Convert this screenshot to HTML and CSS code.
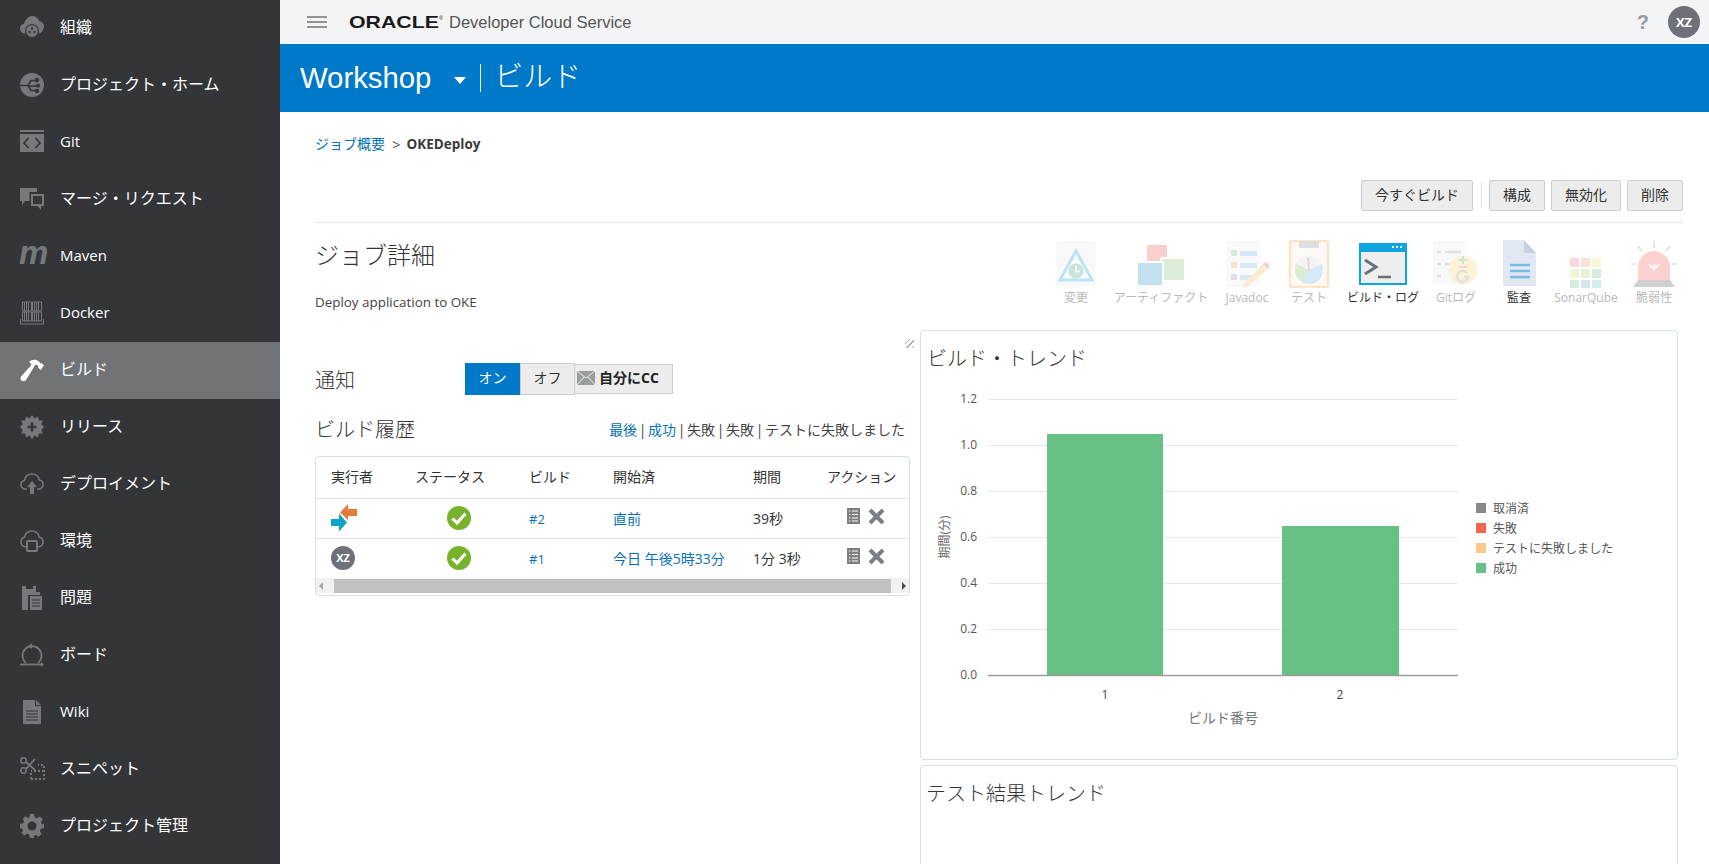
FILE: index.html
```html
<!DOCTYPE html>
<html lang="ja">
<head>
<meta charset="utf-8">
<title>ビルド</title>
<link rel="stylesheet" href="styles.css">
</head>
<body>
<div class="app">
  <nav class="side">
    <a class="item"><svg class="ni" viewBox="0 0 24 24"><path d="M5.500 17.500C2.500 17.500 0 15.500 0 12.500c0-2.500 1.800-4.300 4-4.800C5 4.500 8 0 12 0c3.600 0 6.200 2 7.300 5.200 2.700.3 4.700 2.500 4.700 5.100 0 2.900-2.300 7.200-5.200 7.200Z"/><circle cx="12" cy="15" r="6.500" stroke="#333538" stroke-width="1.200"/><circle cx="12" cy="12.500" r="1.200" fill="#333538"/><circle cx="9.500" cy="16" r="1.200" fill="#333538"/><circle cx="14.500" cy="16" r="1.200" fill="#333538"/></svg><span>組織</span></a>
    <a class="item"><svg class="ni" viewBox="0 0 24 24"><circle cx="12" cy="12" r="12"/><path d="M0 12.500h8l3-5h6M8 12.500l3 5h6M8 13h9" fill="none" stroke="#333538" stroke-width="1.600"/><circle cx="17" cy="7" r="2.200" fill="#333538"/><circle cx="18" cy="12.800" r="2" fill="#333538"/><circle cx="17" cy="18" r="2.200" fill="#333538"/></svg><span>プロジェクト・ホーム</span></a>
    <a class="item"><svg class="ni" viewBox="0 0 24 24"><path d="M0 0h24v2H0Z"/><path d="M0 4h24v18H0Z"/><path d="M8.500 8 4 13l4.500 5M15.500 8l4.500 5-4.500 5" fill="none" stroke="#333538" stroke-width="1.700"/></svg><span class="la">Git</span></a>
    <a class="item"><svg class="ni" viewBox="0 0 24 24"><path d="M0 1h17v4H9.500v9H5l-3 4v-4H0Z"/><path d="M11 7h13v12h-3v4l-3.500-4H11Zm2 2v8h9V9Z"/></svg><span>マージ・リクエスト</span></a>
    <a class="item"><svg class="ni" viewBox="0 0 24 24"><text class="mv" x="-1" y="20">m</text></svg><span class="la">Maven</span></a>
    <a class="item"><svg class="ni" viewBox="0 0 24 24"><path d="M2.500 1h9v9h-9Zm10 0h9v9h-9Zm-10 10h9v9h-9Zm10 0h9v9h-9Z" fill="none" stroke="#75797c"/><path d="M4.500 1v9M6.500 1v9M8.500 1v9M14.500 1v9M16.500 1v9M18.500 1v9M4.500 11v9M6.500 11v9M8.500 11v9M14.500 11v9M16.500 11v9M18.500 11v9" stroke="#75797c"/><path d="M.5 18v5h23v-5" fill="none" stroke="#75797c"/></svg><span class="la">Docker</span></a>
    <a class="item on"><svg class="ni wh" viewBox="0 0 24 24"><path d="M9 4c3-3 7-3 10-.500l1.500 2 1-.500 2.500 2.500-3.500 4.500-2.500-2.500.500-1.500-3-1.500L6 22c-1 1.500-3 1.500-4.500.500C.5 21.500 0 20 1 18.500L11.500 7C11 5.500 10 4.500 9 4Z"/></svg><span>ビルド</span></a>
    <a class="item"><svg class="ni" viewBox="0 0 24 24"><path d="m12 0 2.500 3.500L18 1.500l.8 4 4-.3-1.500 4L24 12l-2.700 2.800 1.500 4-4-.3-.8 4-3.500-2-2.500 3.500-2.500-3.500-3.500 2-.8-4-4 .3 1.500-4L0 12l2.700-2.800-1.500-4 4 .3.8-4 3.500 2Z"/><path d="M12 7.500v9M7.500 12h9" stroke="#333538" stroke-width="2.500"/></svg><span>リリース</span></a>
    <a class="item"><svg class="ni line" viewBox="0 0 24 24"><path d="M7 17H5.500C3 17 1 15 1 12.500 1 10.300 2.500 8.700 4.500 8.200 5.300 4.500 8.300 2 12 2c3.600 0 6.500 2.500 7.400 6 2.100.4 3.600 2.200 3.600 4.500 0 2.500-2 4.500-4.500 4.500H17"/><path class="fl" d="M12 9l5 6h-3v7h-4v-7H7Z"/></svg><span>デプロイメント</span></a>
    <a class="item"><svg class="ni line" viewBox="0 0 24 24"><path d="M6 18C3 18 1 15.500 1 13c0-2.300 1.500-4.200 3.500-4.800C5.300 4.500 8.300 2 12 2c3.600 0 6.500 2.500 7.400 6.200 2.100.4 3.600 2.400 3.600 4.800 0 2.500-2 5-5 5"/><rect x="7" y="12" width="10" height="10" rx="1" stroke-width="2"/></svg><span>環境</span></a>
    <a class="item"><svg class="ni" viewBox="0 0 24 24"><path d="M2 0h4v3h7V0h3v6h4v3H8v15H2Z"/><path d="M10 10h12v14H10Z"/><path d="M12 14h8M12 17h8M12 20h8" stroke="#333538" stroke-width="1.200"/></svg><span>問題</span></a>
    <a class="item"><svg class="ni line" viewBox="0 0 24 24"><path d="M6 20a9.500 9.500 0 1 1 12 0" stroke-width="1.800"/><path class="fl" d="M12 0v6l-3.500-3Z"/><path d="M0 21.500h23" stroke-width="1.800"/><path class="fl" d="M24 21.500 21 19v5Z"/></svg><span>ボード</span></a>
    <a class="item"><svg class="ni" viewBox="0 0 24 24"><path d="M3 0h12v6h6v18H3Z"/><path d="M16 0l5 5h-5Z"/><path d="M6 11h12M6 14h12M6 17h12M6 20h12" stroke="#333538" stroke-width="1"/></svg><span class="la">Wiki</span></a>
    <a class="item"><svg class="ni line" viewBox="0 0 24 24"><circle cx="3.500" cy="3.500" r="2.700" stroke-width="1.500"/><circle cx="3.500" cy="13.500" r="2.700" stroke-width="1.500"/><path d="M6 5l9 8M6 12l9-10" stroke-width="1.800"/><path d="M11 22h13V8h-6M11 22v-6M24 14H11" stroke-width="2" stroke-dasharray="2 2"/></svg><span>スニペット</span></a>
    <a class="item"><svg class="ni" viewBox="0 0 24 24"><path fill-rule="evenodd" d="M10 0h4l.7 3.300 2.300 1L20 2.500 22.800 5.300 21 8.200l1 2.300L24 10v4l-3.200.8-1 2.200 1.700 2.900-2.800 2.800-2.900-1.700-2.200 1L14 24h-4l-.8-3.200-2.200-1-2.900 1.700-2.800-2.800L3 16.800l-1-2.200L0 14v-4l3.200-.8 1-2.200L2.500 5.100 5.300 2.300l2.900 1.700 1.100-.8ZM12 7.500a4.500 4.500 0 1 0 0 9 4.500 4.500 0 0 0 0-9Z"/></svg><span>プロジェクト管理</span></a>
  </nav>

  <div class="main">
    <header class="top">
      <div class="burger"><i></i><i></i><i></i></div>
      <svg class="logo" width="94" height="18" viewBox="0 0 94 18"><text x="0" y="15" textLength="90" lengthAdjust="spacingAndGlyphs">ORACLE</text><text class="reg" x="90" y="7">®</text></svg>
      <span class="prod">Developer Cloud Service</span>
      <span class="help">?</span>
      <span class="ava">XZ</span>
    </header>
    <div class="band">
      <span class="proj">Workshop</span>
      <span class="caret"></span>
      <span class="rule"></span>
      <span class="sect">ビルド</span>
    </div>

    <div class="page">
      <div class="crumb"><a class="lnk">ジョブ概要</a><span class="gt">&gt;</span><b>OKEDeploy</b></div>
      <div class="acts">
        <button class="btn">今すぐビルド</button>
        <span class="sep"></span>
        <button class="btn">構成</button>
        <button class="btn">無効化</button>
        <button class="btn">削除</button>
      </div>

      <section class="det">
        <div class="det-l">
          <h1>ジョブ詳細</h1>
          <p>Deploy application to OKE</p>
        </div>
        <div class="tabs">
          <div class="tab off"><svg viewBox="0 0 48 48"><rect x="4" y="1" width="40" height="46" rx="2" fill="#eee"/><path d="M24 11 40 40H8Z" fill="#e8f6fb" stroke="#23a8e6" stroke-width="3"/><circle cx="24" cy="31" r="7.500" fill="#5aa58a"/><path d="M24 26v5.500h4" stroke="#fff" stroke-width="1.500" fill="none"/></svg><span>変更</span></div>
          <div class="tab off"><svg viewBox="0 0 48 48"><rect x="10" y="5" width="20" height="22" rx="1" fill="#e8645a"/><rect x="24" y="18" width="24" height="23" rx="1" fill="#8cc47c" stroke="#fff" stroke-width="2"/><rect x="0" y="22" width="26" height="24" rx="1" fill="#3d9bd2" stroke="#fff" stroke-width="2"/></svg><span>アーティファクト</span></div>
          <div class="tab off"><svg viewBox="0 0 48 48"><rect x="3" y="1" width="34" height="46" rx="1" fill="#ececec"/><rect x="8" y="10" width="6" height="6" fill="#7cc27c"/><rect x="17" y="11" width="17" height="5" fill="#7eb8e6"/><rect x="8" y="22" width="6" height="6" fill="#f5a84c"/><rect x="17" y="23" width="17" height="5" fill="#7eb8e6"/><rect x="8" y="34" width="6" height="6" fill="#a58ccf"/><rect x="17" y="35" width="12" height="5" fill="#7eb8e6"/><path d="M20 44 40 24l5 5-20 17-6 2Z" fill="#f3bf6a"/><path d="m40 24 3-2 4 4-2 3Z" fill="#e8645a"/></svg><span>Javadoc</span></div>
          <div class="tab off"><svg viewBox="0 0 48 48"><rect x="5" y="1" width="38" height="46" rx="2" fill="#fbeedd" stroke="#f5a84c" stroke-width="2.500"/><rect x="14" y="1" width="20" height="7" fill="#999"/><circle cx="24" cy="30" r="14" fill="#78b8e6"/><path d="M24 30 11 24a14 14 0 0 1 26 0Z" fill="#ddd"/><path d="m24 30-13-6a14 14 0 0 0 7 18Z" fill="#8cc47c"/><path d="m23 18 1 12" stroke="#e8645a" stroke-width="2"/></svg><span>テスト</span></div>
          <div class="tab cur"><svg viewBox="0 0 48 48"><rect x="1" y="4" width="46" height="40" fill="#eee" stroke="#0ea4df" stroke-width="2"/><rect x="0" y="3" width="48" height="9" fill="#0ea4df"/><path d="M37 6h2v2h-2Zm4 0h2v2h-2Zm-8 0h2v2h-2Z" fill="#fff"/><path d="m6 20 11 7-11 7" fill="none" stroke="#66727e" stroke-width="3"/><path d="M19 37h13" stroke="#66727e" stroke-width="2.500"/></svg><span>ビルド・ログ</span></div>
          <div class="tab off"><svg viewBox="0 0 48 48"><rect x="1" y="1" width="32" height="44" rx="1" fill="#eee"/><path d="M5 12h4M13 12h16M5 24h4M13 24h16M5 36h4" stroke="#999" stroke-width="2.500"/><circle cx="31" cy="30" r="14.500" fill="#f6d77e"/><path d="M31 16v8M27 20h8" stroke="#5ab45a" stroke-width="2"/><path d="M27 27h8" stroke="#e8645a" stroke-width="2"/><path d="M35 33a5.500 5.500 0 1 0 1 4h-4" fill="none" stroke="#999" stroke-width="2.500"/></svg><span>Gitログ</span></div>
          <div class="tab cur"><svg viewBox="0 0 48 48"><path d="M8 0h21l12 13v33H8Z" fill="#e1e8f1"/><path d="m29 0 12 13H29Z" fill="#c8d2de"/><path d="M15 25h20M15 31h20M15 37h20" stroke="#7bb8e4" stroke-width="2.500"/></svg><span>監査</span></div>
          <div class="tab off"><svg viewBox="0 0 48 48"><g class="grid"><rect x="8" y="18" width="9" height="9" fill="#ef7c93"/><rect x="19" y="18" width="9" height="9" fill="#f5a473"/><rect x="30" y="18" width="9" height="9" fill="#f7dd80"/><rect x="8" y="29" width="9" height="9" fill="#dde07a"/><rect x="19" y="29" width="9" height="9" fill="#b6d77a"/><rect x="30" y="29" width="9" height="9" fill="#7ec08a"/><rect x="8" y="40" width="9" height="8" fill="#6cc5a8"/><rect x="19" y="40" width="9" height="8" fill="#7fa4d0"/><rect x="30" y="40" width="9" height="8" fill="#6cc5c5"/></g></svg><span>SonarQube</span></div>
          <div class="tab off"><svg viewBox="0 0 48 48"><path d="M24 1v7M8 6l4 5M40 6l-4 5M1 24h5M42 24h5" stroke="#999" stroke-width="1.500"/><path d="M8 40V27a16 16 0 0 1 32 0v13Z" fill="#fa6a62"/><path d="m19 24 3 4 2-3 2 3 3-4M24 26v5" stroke="#fff" stroke-width="1.500" fill="none"/><path d="M8 40h32l5 7H3Z" fill="#666"/></svg><span>脆弱性</span></div>
        </div>
      </section>

      <div class="cols">
        <div class="left">
          <div class="handle"></div>
          <div class="notif">
            <span class="h2">通知</span>
            <button class="sw sw-on">オン</button>
            <button class="sw">オフ</button>
            <button class="cc"><svg width="18" height="14" viewBox="0 0 18 14"><path d="M0 0h18v14H0Z" fill="#9a9c9e"/><path d="m0 0 9 7 9-7M0 14l7-8M18 14l-7-8" fill="none" stroke="#ececec"/></svg><b>自分にCC</b></button>
          </div>
          <div class="hist">
            <span class="h2">ビルド履歴</span>
            <span class="filt"><a class="lnk">最後</a> | <a class="lnk">成功</a> | 失敗 | 失敗 | テストに失敗しました</span>
          </div>
          <div class="tbl">
            <table>
              <colgroup><col class="c1"><col class="c2"><col class="c3"><col class="c4"><col class="c5"><col class="c6"></colgroup>
              <thead><tr><th>実行者</th><th>ステータス</th><th>ビルド</th><th>開始済</th><th>期間</th><th>アクション</th></tr></thead>
              <tbody>
                <tr>
                  <td><svg class="who" width="26" height="28" viewBox="0 0 26 28"><path d="M26 5h-9V0L9 8.500 17 16v-4h9Z" fill="#e57a3c"/><path d="M0 15h8V9.500l8 9-8 9V22H0Z" fill="#0ea4c9"/></svg></td>
                  <td class="ctr"><svg width="24" height="24" viewBox="0 0 24 24"><circle cx="12" cy="12" r="12" fill="#76b22c"/><path d="m5.500 12.500 4.500 4.500 8.500-9.500" fill="none" stroke="#fff" stroke-width="3"/></svg></td>
                  <td><a class="lnk num">#2</a></td>
                  <td><a class="lnk">直前</a></td>
                  <td>39秒</td>
                  <td><span class="rowact"><svg width="13" height="16" viewBox="0 0 13 16"><path d="M0 0h13v16H0Z" fill="#7d8083"/><path d="M2 3h1.500M5 3h6M2 6.500h1.500M5 6.500h6M2 10h1.500M5 10h6M2 13h1.500M5 13h6" stroke="#fff" stroke-width="1.200"/></svg><svg width="17" height="17" viewBox="0 0 17 17"><path d="m2 2 13 13M15 2 2 15" stroke="#7d8083" stroke-width="4"/></svg></span></td>
                </tr>
                <tr>
                  <td><span class="ava ava-s">XZ</span></td>
                  <td class="ctr"><svg width="24" height="24" viewBox="0 0 24 24"><circle cx="12" cy="12" r="12" fill="#76b22c"/><path d="m5.500 12.500 4.500 4.500 8.500-9.500" fill="none" stroke="#fff" stroke-width="3"/></svg></td>
                  <td><a class="lnk num">#1</a></td>
                  <td><a class="lnk">今日 午後5時33分</a></td>
                  <td>1分 3秒</td>
                  <td><span class="rowact"><svg width="13" height="16" viewBox="0 0 13 16"><path d="M0 0h13v16H0Z" fill="#7d8083"/><path d="M2 3h1.500M5 3h6M2 6.500h1.500M5 6.500h6M2 10h1.500M5 10h6M2 13h1.500M5 13h6" stroke="#fff" stroke-width="1.200"/></svg><svg width="17" height="17" viewBox="0 0 17 17"><path d="m2 2 13 13M15 2 2 15" stroke="#7d8083" stroke-width="4"/></svg></span></td>
                </tr>
              </tbody>
            </table>
            <div class="sbar"><i class="al"></i><i class="thumb"></i><i class="ar"></i></div>
          </div>
        </div>

        <div class="right">
          <section class="panel p1">
            <h3>ビルド・トレンド</h3>
            <svg class="chart" width="756" height="385" viewBox="921 374 756 385">
              <g class="gl"><path d="M988 399.500h470M988 445.500h470M988 491.500h470M988 537.500h470M988 583.500h470M988 629.500h470"/></g>
              <rect x="1047" y="434" width="116" height="241" fill="#67c184"/>
              <rect x="1282" y="526" width="117" height="149" fill="#67c184"/>
              <path d="M988 675.500h470" stroke="#9a9a9a" stroke-width="1.500"/>
              <g class="yt"><text x="977" y="403">1.2</text><text x="977" y="449">1.0</text><text x="977" y="495">0.8</text><text x="977" y="541">0.6</text><text x="977" y="587">0.4</text><text x="977" y="633">0.2</text><text x="977" y="679">0.0</text></g>
              <g class="xt"><text x="1105" y="699">1</text><text x="1340" y="699">2</text></g>
              <text class="axt" x="1223" y="723">ビルド番号</text>
              <text class="axt axt-s" transform="rotate(-90 949 537)" x="949" y="537">期間(分)</text>
              <rect x="1476" y="503" width="10" height="10" fill="#87898c"/><text class="lg" x="1493" y="513">取消済</text>
              <rect x="1476" y="523" width="10" height="10" fill="#f0654c"/><text class="lg" x="1493" y="533">失敗</text>
              <rect x="1476" y="543" width="10" height="10" fill="#fbc98e"/><text class="lg" x="1493" y="553">テストに失敗しました</text>
              <rect x="1476" y="563" width="10" height="10" fill="#67c184"/><text class="lg" x="1493" y="573">成功</text>
            </svg>
          </section>
          <section class="panel p2">
            <h3 class="t2">テスト結果トレンド</h3>
          </section>
        </div>
      </div>
    </div>
  </div>
</div>
</body>
</html>
```

FILE: styles.css
```css
* { box-sizing: border-box; }
html, body { margin: 0; padding: 0; height: 100%; overflow: hidden; background: #fff; }
body { font-family: "Open Sans", "Noto Sans CJK JP", sans-serif; color: #333; font-size: 14px; }
.app { display: flex; height: 864px; overflow: hidden; }

/* sidebar */
.side { width: 280px; flex: none; background: #333538; display: flex; flex-direction: column; }
.item { height: 57px; flex: none; display: flex; align-items: center; padding: 0 0 2px 20px; gap: 16px; color: #fff; font-size: 16px; line-height: 24px; }
.item span { position: relative; top: -1px; }
.item .la { font-size: 15px; }
.item.on { background: #707477; }
.ni { width: 24px; height: 24px; flex: none; fill: #75797c; overflow: visible; }
.ni.wh { fill: #fff; }
.ni.line { fill: none; stroke: #75797c; stroke-width: 1.600; }
.ni.line .fl { fill: #75797c; stroke: none; }
.mv { font: italic bold 33px "Liberation Sans", sans-serif; }

/* header */
.main { flex: 1; min-width: 0; display: flex; flex-direction: column; }
.top { height: 44px; flex: none; background: #f3f4f6; display: flex; align-items: center; padding-left: 27px; padding-right: 9px; }
.burger { width: 20px; display: flex; flex-direction: column; gap: 3px; margin-right: 22px; }
.burger i { display: block; height: 2px; background: #8f9396; }
.logo { flex: none; margin-right: 6px; }
.logo text { font: bold 17px "Liberation Sans", sans-serif; fill: #1a1a1a; }
.logo .reg { font-size: 6px; font-weight: 400; }
.prod { font: 16.500px/20px "Liberation Sans", sans-serif; color: #555; }
.help { margin-left: auto; margin-right: 19px; font: bold 20px/20px "Liberation Sans", sans-serif; color: #9a9c9e; }
.ava { width: 32px; height: 32px; border-radius: 50%; background: #6f7079; color: #fff; font: bold 13px/32px "Open Sans", sans-serif; text-align: center; display: block; }
.ava-s { width: 24px; height: 24px; font-size: 11px; line-height: 24px; }
.band { height: 68px; flex: none; background: #0079c9; color: #fff; display: flex; align-items: center; padding-left: 20px; }
.proj { font: 29.300px/36px "Liberation Sans", sans-serif; }
.caret { width: 0; height: 0; border: 6px solid transparent; border-top: 7px solid #fff; border-bottom: 0; margin-left: 23px; margin-top: 4px; }
.rule { width: 1px; height: 28px; background: #fff; margin-left: 14px; margin-right: 13px; }
.sect { font-size: 29px; line-height: 36px; font-weight: 300; margin-top: -4px; }

/* page */
.page { padding: 22px 26px 0 35px; }
.lnk { color: #0572b8; }
.crumb { height: 20px; display: flex; align-items: center; font-size: 14px; line-height: 20px; }
.crumb .gt { margin: 0 6px 0 7px; font-size: 15px; color: #555; }
.crumb b { font-size: 13.500px; color: #3a3a3a; }
.acts { display: flex; justify-content: flex-end; align-items: flex-start; gap: 6px; margin-top: 26px; padding-bottom: 11px; border-bottom: 1px solid #e5e5e5; height: 43px; }
.btn { height: 31px; padding: 0 13px 2px; background: #ececec; border: 1px solid #c9cdd0; border-radius: 2px; font: 14px/20px "Open Sans", "Noto Sans CJK JP", sans-serif; color: #333; }
.sep { width: 1px; height: 25px; background: #dcdcdc; margin: 3px 1px 0 2px; }

.det { display: flex; justify-content: space-between; height: 107px; margin-right: -5px; }
.det-l { padding-top: 16px; }
h1 { margin: 0; font-size: 24px; line-height: 32px; font-weight: 300; color: #333; }
.det-l p { margin: 21px 0 0; font-size: 13.400px; line-height: 20px; color: #444; }
.tabs { display: grid; grid-template-columns: 60px 110px 62px 62px 86px 60px 66px 68px 68px; padding-top: 17px; height: 90px; }
.tab { display: flex; flex-direction: column; align-items: center; }
.tab svg { width: 48px; height: 48px; flex: none; }
.tab span { font-size: 12px; line-height: 16px; margin-top: 2px; white-space: nowrap; color: #333; }
.tab.off svg { opacity: .3; }
.tab.off span { color: #b8b8b8; }

.cols { display: flex; gap: 10px; }
.left { width: 595px; flex: none; padding-top: 33px; position: relative; }
.handle { position: absolute; right: -4px; top: 9px; width: 9px; height: 9px; background: repeating-linear-gradient(135deg, transparent 0 3px, #aaa 3px 4px); }
.h2 { font-size: 20px; line-height: 30px; font-weight: 300; color: #333; }
.notif { display: flex; align-items: center; height: 32px; }
.notif .h2 { width: 150px; padding-top: 4px; }
.sw { width: 55px; height: 32px; border: 1px solid #c9cdd0; background: #ececec; font: 14px/20px "Open Sans", "Noto Sans CJK JP", sans-serif; color: #333; padding: 0 0 2px; }
.sw-on { background: #0079c9; border-color: #0079c9; color: #fff; }
.cc { height: 30px; width: 98px; border: 1px solid #c9cdd0; border-left: 0; background: #ececec; padding: 0 0 2px 2px; display: flex; align-items: center; gap: 4px; font: 14px/20px "Open Sans", "Noto Sans CJK JP", sans-serif; color: #222; }
.hist { display: flex; justify-content: space-between; align-items: center; height: 30px; margin-top: 20px; padding-right: 5px; }
.filt { font-size: 14px; line-height: 20px; color: #444; word-spacing: -2px; }

.tbl { margin-top: 11px; border: 1px solid #d6dfe6; border-radius: 4px; height: 140px; overflow: hidden; }
table { width: 593px; table-layout: fixed; border-collapse: collapse; font-size: 14px; }
.c1 { width: 84px; } .c2 { width: 114px; } .c3 { width: 84px; } .c4 { width: 140px; } .c5 { width: 74px; } .c6 { width: 97px; }
th { height: 41px; padding: 0 0 3px 15px; text-align: left; font-weight: 400; font-size: 14px; color: #333; white-space: nowrap; }
td { height: 40px; padding: 0 0 0 15px; border-top: 1px solid #dfe4e8; white-space: nowrap; }
.num { font-size: 13px; }
td svg { display: block; }
td.ctr svg { margin-left: 32px; }
.rowact { display: flex; align-items: center; gap: 8px; margin-left: 20px; margin-top: -4px; }
.sbar { height: 15px; background: #f1f1f1; position: relative; }
.thumb { position: absolute; left: 18px; right: 18px; top: 1px; bottom: 0; background: #c1c1c1; }
.al, .ar { position: absolute; top: 4px; width: 0; height: 0; border: 4px solid transparent; }
.al { left: 3px; border-right-color: #a3a3a3; border-left: 0; }
.ar { right: 3px; border-left-color: #505050; border-right: 0; }

.right { width: 758px; flex: none; }
.panel { border: 1px solid #d6dfe6; border-radius: 4px; background: #fff; }
.p1 { height: 430px; margin-bottom: 5px; }
.p2 { height: 200px; }
h3 { margin: 0; padding: 13px 0 0 6px; font-size: 20px; line-height: 30px; font-weight: 300; color: #333; }
h3.t2 { padding-left: 5px; }
.chart { display: block; }
.chart text { font-family: "Open Sans", "Noto Sans CJK JP", sans-serif; }
.gl path { stroke: #e6e8ea; stroke-width: 1; fill: none; }
.yt text { font-size: 12px; fill: #555; text-anchor: end; }
.xt text { font-size: 12px; fill: #444; text-anchor: middle; }
.axt { font-size: 14px; fill: #777; text-anchor: middle; }
.axt-s { font-size: 12px; fill: #666; }
.lg { font-size: 12px; fill: #555; }
```
